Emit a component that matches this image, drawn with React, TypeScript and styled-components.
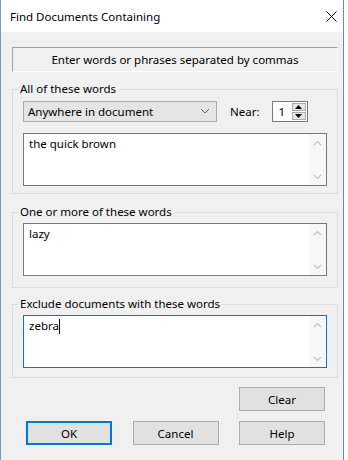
import React from "react";
import styled, { createGlobalStyle } from "styled-components";

const GlobalStyle = createGlobalStyle`
  html, body {
    margin: 0;
    padding: 0;
    background: #ffffff;
  }
  body {
    font-family: "Noto Sans", "Open Sans", sans-serif;
    font-size: 11.5px;
    color: #000;
  }
  * {
    box-sizing: border-box;
  }
`;

const ScrollArrow: React.FC<{ up?: boolean }> = ({ up }) => (
  <svg width="9" height="6" viewBox="0 0 9 6">
    <path
      d={up ? "M1 5 L4.5 1.5 L8 5" : "M1 1 L4.5 4.5 L8 1"}
      fill="none"
      stroke="#c2c2c2"
      strokeWidth="1.2"
    />
  </svg>
);

const EditBox: React.FC<{ text: string; focused?: boolean }> = ({ text, focused }) => (
  <Styled.Edit $focused={focused}>
    <Styled.EditText>
      {text}
      {focused && <Styled.Caret />}
    </Styled.EditText>
    <Styled.ScrollBar>
      <ScrollArrow up />
      <ScrollArrow />
    </Styled.ScrollBar>
  </Styled.Edit>
);

export default function App() {
  return (
    <>
      <GlobalStyle />
      <Styled.Window>
        <Styled.TitleBar>
          <span>Find Documents Containing</span>
          <Styled.Close>
            <svg width="11" height="11" viewBox="0 0 11 11">
              <path d="M0.5 0.5 L10.5 10.5 M10.5 0.5 L0.5 10.5" stroke="#000" strokeWidth="1" />
            </svg>
          </Styled.Close>
        </Styled.TitleBar>

        <Styled.Body>
          <Styled.Header>Enter words or phrases separated by commas</Styled.Header>

          <Styled.Group $top={9} $bottom={7}>
            <legend>All of these words</legend>
            <Styled.OptionsRow>
              <Styled.Combo>
                <span>Anywhere in document</span>
                <svg width="10" height="6" viewBox="0 0 10 6">
                  <path d="M1 1 L5 5 L9 1" fill="none" stroke="#606060" strokeWidth="1" />
                </svg>
              </Styled.Combo>
              <Styled.NearLabel>Near:</Styled.NearLabel>
              <Styled.Spinner>
                <Styled.SpinValue>1</Styled.SpinValue>
                <Styled.SpinButtons>
                  <Styled.SpinButton>
                    <svg width="7" height="4" viewBox="0 0 7 4">
                      <path d="M0 4 L3.5 0 L7 4 Z" fill="#000" />
                    </svg>
                  </Styled.SpinButton>
                  <Styled.SpinButton>
                    <svg width="7" height="4" viewBox="0 0 7 4">
                      <path d="M0 0 L3.5 4 L7 0 Z" fill="#000" />
                    </svg>
                  </Styled.SpinButton>
                </Styled.SpinButtons>
              </Styled.Spinner>
            </Styled.OptionsRow>
            <EditBox text="the quick brown" />
          </Styled.Group>

          <Styled.Group $top={10} $bottom={11}>
            <legend>One or more of these words</legend>
            <EditBox text="lazy" />
          </Styled.Group>

          <Styled.Group $top={8} $bottom={9}>
            <legend>Exclude documents with these words</legend>
            <EditBox text="zebra" focused />
          </Styled.Group>

          <Styled.ButtonArea>
            <Styled.ButtonRow>
              <Styled.Button>Clear</Styled.Button>
            </Styled.ButtonRow>
            <Styled.ButtonRow $spread>
              <Styled.Button $default>OK</Styled.Button>
              <Styled.Button>Cancel</Styled.Button>
              <Styled.Button>Help</Styled.Button>
            </Styled.ButtonRow>
          </Styled.ButtonArea>
        </Styled.Body>
      </Styled.Window>
    </>
  );
}

const Styled = {
  Window: styled.div`
    display: flex;
    flex-direction: column;
    width: 344px;
    height: 460px;
    border-left: 1px solid #7d9cc0;
    border-right: 1px solid #4f93d4;
    background: #f0f0f0;
  `,
  TitleBar: styled.div`
    display: flex;
    align-items: center;
    justify-content: space-between;
    height: 32px;
    padding-left: 9px;
    background: #ffffff;
    font-size: 11.5px;
  `,
  Close: styled.div`
    display: flex;
    align-items: center;
    justify-content: center;
    width: 24px;
    height: 32px;
  `,
  Body: styled.div`
    flex: 1;
    display: flex;
    flex-direction: column;
    padding: 15px 5px 0 11px;
    background: #f0f0f0;
  `,
  Header: styled.div`
    display: flex;
    align-items: center;
    justify-content: center;
    height: 25px;
    border: 1px solid;
    border-color: #a0a0a0 #ffffff #ffffff #a0a0a0;
  `,
  Group: styled.fieldset<{ $top: number; $bottom: number }>`
    margin: ${(p) => p.$top}px 0 0 0;
    padding: 3px 10px ${(p) => p.$bottom}px 10px;
    border: 1px solid #dcdcdc;
    min-width: 0;
    legend {
      margin-left: -5px;
      padding: 0 2px;
      line-height: 16px;
      font-size: 11.5px;
    }
  `,
  OptionsRow: styled.div`
    display: flex;
    align-items: center;
    height: 22px;
    margin-bottom: 11px;
  `,
  Combo: styled.div`
    display: flex;
    align-items: center;
    justify-content: space-between;
    width: 194px;
    height: 21px;
    padding: 0 6px 0 4px;
    background: #e5e5e5;
    border: 1px solid #acacac;
  `,
  NearLabel: styled.span`
    margin-left: 13px;
  `,
  Spinner: styled.div`
    display: flex;
    align-items: stretch;
    width: 36px;
    height: 21px;
    margin-left: 12px;
    background: #ffffff;
    border: 1px solid #7a7a7a;
  `,
  SpinValue: styled.span`
    flex: 1;
    display: flex;
    align-items: center;
    padding-left: 6px;
  `,
  SpinButtons: styled.div`
    display: flex;
    flex-direction: column;
    width: 15px;
    padding: 1px 1px 1px 0;
    gap: 1px;
  `,
  SpinButton: styled.div`
    flex: 1;
    display: flex;
    align-items: center;
    justify-content: center;
    background: #e5e5e5;
    border: 1px solid #acacac;
  `,
  Edit: styled.div<{ $focused?: boolean }>`
    display: flex;
    height: 53px;
    background: #ffffff;
    border: 1px solid ${(p) => (p.$focused ? "#0078d7" : "#7a7a7a")};
  `,
  EditText: styled.div`
    flex: 1;
    display: flex;
    align-items: flex-start;
    padding: 2px 5px;
    line-height: 16px;
  `,
  Caret: styled.span`
    display: inline-block;
    width: 1px;
    height: 15px;
    margin-top: 1px;
    background: #000;
  `,
  ScrollBar: styled.div`
    display: flex;
    flex-direction: column;
    align-items: center;
    justify-content: space-between;
    width: 17px;
    padding: 6px 0 5px;
    background: #f7f7f7;
  `,
  ButtonArea: styled.div`
    display: flex;
    flex-direction: column;
    gap: 10px;
    margin-top: 9px;
    padding: 0 13px 0 14px;
  `,
  ButtonRow: styled.div<{ $spread?: boolean }>`
    display: flex;
    justify-content: ${(p) => (p.$spread ? "space-between" : "flex-end")};
  `,
  Button: styled.button<{ $default?: boolean }>`
    width: 86px;
    height: 24px;
    padding: 0;
    font-family: "Noto Sans", "Open Sans", sans-serif;
    font-size: 11.5px;
    color: #000;
    background: #e1e1e1;
    border: ${(p) => (p.$default ? "2px solid #0078d7" : "1px solid #adadad")};
  `,
};
